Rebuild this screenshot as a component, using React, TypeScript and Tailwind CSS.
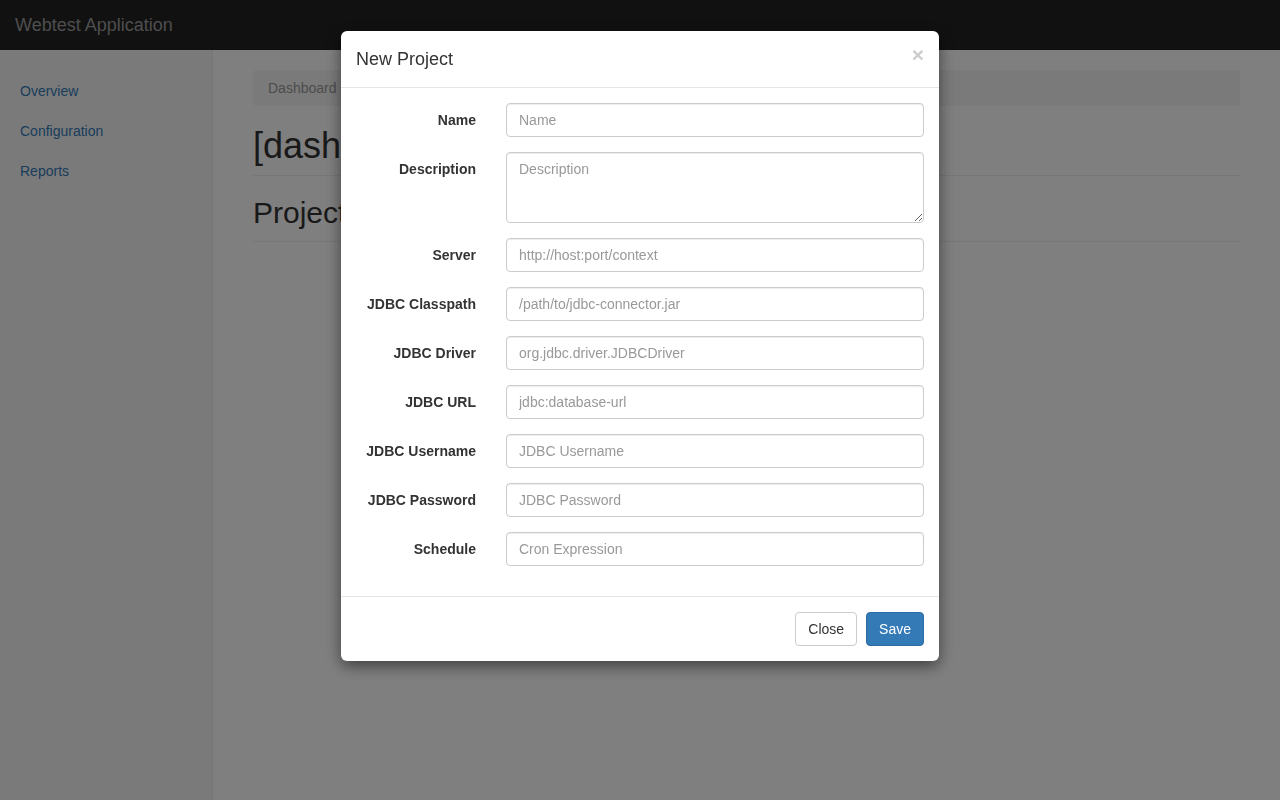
import React from 'react';

const fields = [
  { label: 'Name', placeholder: 'Name' },
  { label: 'Description', placeholder: 'Description', multiline: true },
  { label: 'Server', placeholder: 'http://host:port/context' },
  { label: 'JDBC Classpath', placeholder: '/path/to/jdbc-connector.jar' },
  { label: 'JDBC Driver', placeholder: 'org.jdbc.driver.JDBCDriver' },
  { label: 'JDBC URL', placeholder: 'jdbc:database-url' },
  { label: 'JDBC Username', placeholder: 'JDBC Username' },
  { label: 'JDBC Password', placeholder: 'JDBC Password', password: true },
  { label: 'Schedule', placeholder: 'Cron Expression' },
];

const inputCls =
  'block w-full rounded-[4px] border border-[#ccc] bg-white px-3 text-[14px] text-[#555] shadow-[inset_0_1px_1px_rgba(0,0,0,0.075)] outline-none placeholder:text-[#999]';

export default function App() {
  return (
    <div className="relative min-h-[800px] bg-white text-[14px] text-[#333] [font-family:'Liberation_Sans',Arial,sans-serif]">
      {/* Navbar */}
      <div className="flex h-[50px] items-center bg-[#222] px-[15px] pt-[1px]">
        <span className="text-[18px] text-[#9d9d9d]">Webtest Application</span>
      </div>

      <div className="flex min-h-[750px]">
        {/* Sidebar */}
        <div className="w-[213px] shrink-0 border-r border-[#eee] bg-[#f5f5f5] pt-[21px] pb-[20px]">
          {['Overview', 'Configuration', 'Reports'].map((item) => (
            <div key={item} className="px-[20px] py-[10px] leading-[20px] text-[#337ab7]">
              {item}
            </div>
          ))}
        </div>

        {/* Main */}
        <div className="flex-1 px-[40px] pt-[20px]">
          <div className="rounded-[4px] bg-[#f5f5f5] px-[15px] py-[8px] leading-[20px] text-[#999]">
            Dashboard
          </div>
          <div className="mt-[20px] border-b border-[#eee] pb-[9px]">
            <h1 className="text-[36px] leading-[40px] font-medium">[dashboard]</h1>
          </div>
          <div className="mt-[20px] border-b border-[#eee] pb-[12px]">
            <h2 className="text-[30px] leading-[33px] font-medium">Projects</h2>
          </div>
        </div>
      </div>

      {/* Backdrop */}
      <div className="fixed inset-0 bg-black/50" />

      {/* Modal */}
      <div className="fixed top-[31px] left-[341px] w-[598px] rounded-[6px] bg-white shadow-[0_5px_15px_rgba(0,0,0,0.5)]">
        <div className="flex items-start justify-between border-b border-[#e5e5e5] p-[15px]">
          <h4 className="text-[18px] leading-[26px] text-[#333]">New Project</h4>
          <span className="mt-[-2px] text-[21px] leading-[21px] font-bold text-[#ccc]">×</span>
        </div>

        <div className="p-[15px]">
          {fields.map((f) => (
            <div key={f.label} className="mb-[15px] flex">
              <label className="w-[120px] shrink-0 pt-[7px] text-right leading-[20px] font-bold text-[#333]">
                {f.label}
              </label>
              <div className="ml-[30px] flex-1">
                {f.multiline ? (
                  <textarea
                    placeholder={f.placeholder}
                    className={inputCls + ' h-[71px] py-[6px] leading-[20px]'}
                  />
                ) : (
                  <input
                    type={f.password ? 'password' : 'text'}
                    placeholder={f.placeholder}
                    className={inputCls + ' h-[34px] py-[6px]'}
                  />
                )}
              </div>
            </div>
          ))}
        </div>

        <div className="flex justify-end gap-[9px] border-t border-[#e5e5e5] p-[15px]">
          <button className="h-[34px] rounded-[4px] border border-[#ccc] bg-white px-[12px] text-[14px] text-[#333]">
            Close
          </button>
          <button className="h-[34px] rounded-[4px] border border-[#2e6da4] bg-[#337ab7] px-[12px] text-[14px] text-white">
            Save
          </button>
        </div>
      </div>
    </div>
  );
}
